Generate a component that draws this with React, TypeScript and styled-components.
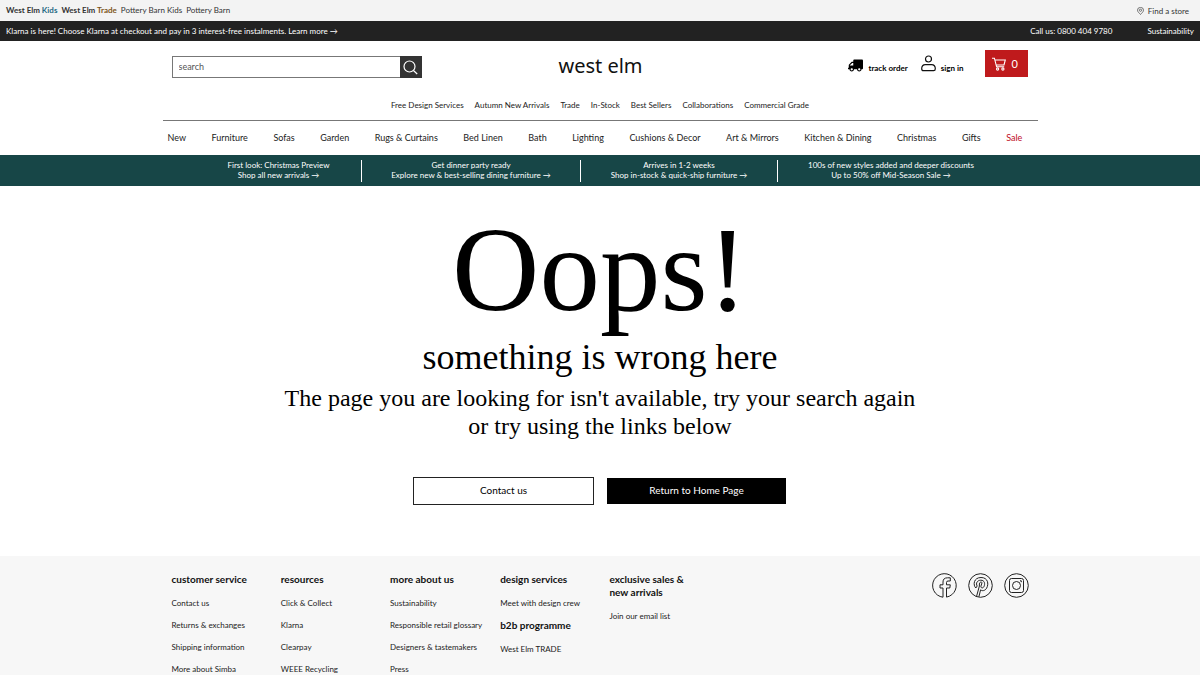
import React from "react";
import styled, { createGlobalStyle, css } from "styled-components";
import { FaTruck } from "react-icons/fa";

const sans = `Lato, "Liberation Sans", sans-serif`;
const serif = `"Liberation Serif", "Times New Roman", serif`;

const GlobalStyle = createGlobalStyle`
  *, *::before, *::after { box-sizing: border-box; }
  body {
    margin: 0;
    background: #fff;
    color: #222;
    font-family: ${sans};
    font-size: 8px;
    line-height: 10px;
  }
  a { color: inherit; text-decoration: none; }
  ul { list-style: none; margin: 0; padding: 0; }
  h1, h2, h3, p { margin: 0; }
  svg { display: block; flex: none; }
`;

const Page = styled.div`
  display: flex;
  flex-direction: column;
  min-height: 100vh;
`;

const Bar = styled.div<{ $dark?: boolean }>`
  display: flex;
  align-items: center;
  justify-content: space-between;
  padding: 0 6px;
  height: ${(p) => (p.$dark ? 20 : 21)}px;
  background: ${(p) => (p.$dark ? "#222" : "#f3f3f3")};
  color: ${(p) => (p.$dark ? "#fff" : "#333")};
`;

const BarGroup = styled.div<{ $gap: number }>`
  display: flex;
  align-items: center;
  gap: ${(p) => p.$gap}px;
`;

const BrandLink = styled.a<{ $strong?: boolean }>`
  font-weight: ${(p) => (p.$strong ? 700 : 400)};
  padding-bottom: 2px;
`;

const Accent = styled.span<{ $color: string }>`
  color: ${(p) => p.$color};
  font-weight: 700;
`;

const StoreLink = styled.a`
  display: flex;
  align-items: center;
  gap: 4px;
  padding-right: 5px;
`;

const Container = styled.div`
  width: 100%;
  max-width: 875px;
  margin: 0 auto;
`;

const Header = styled(Container)`
  display: grid;
  grid-template-columns: 1fr auto 1fr;
  padding: 9px 10px 0 9px;
  height: 59px;
`;

const SearchForm = styled.form`
  display: flex;
  width: 250px;
  height: 22px;
  margin-top: 6px;
`;

const SearchInput = styled.input`
  flex: 1;
  min-width: 0;
  padding: 0 6px 2px;
  border: 1px solid #777;
  border-right: 0;
  border-radius: 0;
  font: 9px ${sans};
  color: #333;
  &::placeholder { color: #555; opacity: 1; }
`;

const SearchButton = styled.button`
  display: grid;
  place-items: center;
  width: 22px;
  padding: 0;
  border: 0;
  background: #333;
  color: #fff;
`;

const Logo = styled.a`
  font: 20px/24px "Noto Sans", sans-serif;
  color: #111;
  margin: 4px 0 0 2px;
`;

const Actions = styled.div`
  display: flex;
  justify-content: flex-end;
  align-items: flex-start;
`;

const Action = styled.a<{ $after: number }>`
  display: flex;
  align-items: flex-end;
  gap: 5px;
  height: 23px;
  margin-right: ${(p) => p.$after}px;
  color: #000;
  font-weight: 700;
`;

const Basket = styled.button`
  display: flex;
  align-items: center;
  gap: 6px;
  width: 43px;
  height: 27px;
  padding: 0 7px;
  border: 0;
  background: #bf1a1c;
  color: #fff;
  font: 11px ${sans};
`;

const QuickLinks = styled.nav`
  display: flex;
  justify-content: center;
  gap: 11px;
  height: 20px;
`;

const MainNav = styled(Container).attrs({ as: "nav" })`
  display: flex;
  align-items: center;
  justify-content: space-between;
  height: 35px;
  padding: 0 15px 1px 5px;
  border-top: 1px solid #777;
  font-size: 9px;
`;

const NavLink = styled.a<{ $sale?: boolean }>`
  white-space: nowrap;
  color: ${(p) => (p.$sale ? "#c00d26" : "#222")};
`;

const PromoBand = styled.div`
  display: grid;
  grid-template-columns: 165px 219px 197px 227px;
  align-items: center;
  justify-content: center;
  height: 31px;
  background: #174647;
  color: #fff;
`;

const Promo = styled.a`
  padding-bottom: 2px;
  text-align: center;
  white-space: nowrap;
  & + & { border-left: 1px solid #fff; }
  span { display: block; }
`;

const Main = styled.main`
  display: flex;
  flex-direction: column;
  align-items: center;
  padding: 17px 16px 51px;
  text-align: center;
  color: #000;
  font-family: ${serif};
`;

const Oops = styled.h1`
  font-size: 121px;
  line-height: 132px;
  font-weight: 400;
`;

const Subtitle = styled.h2`
  margin-top: 1px;
  font-size: 36px;
  line-height: 42px;
  font-weight: 400;
`;

const Message = styled.p`
  max-width: 650px;
  margin-top: 6px;
  font-size: 24px;
  line-height: 28px;
`;

const Buttons = styled.div`
  display: flex;
  gap: 12px;
  margin-top: 37px;
`;

const Cta = styled.a<{ $solid?: boolean }>`
  width: 181px;
  height: 28px;
  font: 10px/25px ${sans};
  border: 1px solid ${(p) => (p.$solid ? "#fff" : "#222")};
  ${(p) => p.$solid && css`background: #000; color: #fff;`}
`;

const Footer = styled.footer`
  flex: 1;
  background: #f7f7f7;
`;

const FooterGrid = styled(Container)`
  display: grid;
  grid-template-columns: repeat(8, 1fr);
`;

const FooterColumn = styled.section`
  padding: 17px 9px 0;
`;

const FooterTitle = styled.h3`
  margin-bottom: 12px;
  font-size: 10px;
  line-height: 13px;
  color: #111;
  white-space: nowrap;
`;

const FooterLinks = styled.ul`
  display: grid;
  gap: 12px;
  white-space: nowrap;
  & + ${FooterTitle} { margin-top: 11px; }
`;

const Social = styled.div`
  grid-column: 7 / 9;
  display: flex;
  justify-content: flex-end;
  gap: 11px;
  padding: 17px 9px 0 0;
`;

const PinIcon = () => (
  <svg width="7" height="8" viewBox="0 0 14 16" fill="none" stroke="#555" strokeWidth="1.6" aria-hidden="true">
    <path d="M7 15C4 11.5 1 9.500 1 6.300A6 5.500 0 0 1 13 6.300C13 9.500 10 11.500 7 15Z" />
    <circle cx="7" cy="6.500" r="2.200" />
  </svg>
);

const SearchIcon = () => (
  <svg width="15" height="15" viewBox="0 0 15 15" fill="none" stroke="currentColor" strokeWidth="1.200" aria-hidden="true">
    <circle cx="6.500" cy="6.500" r="5.500" />
    <path d="M10.500 10.500L14.200 14" />
  </svg>
);

const Truck = styled(FaTruck)`
  transform: scaleX(-1);
`;

const PersonIcon = () => (
  <svg width="15" height="18" viewBox="0 0 15 18" fill="none" stroke="#111" strokeWidth="1.200" aria-hidden="true">
    <circle cx="7.500" cy="4" r="3" />
    <path d="M.7 13.800C.7 11 2.200 9.600 4.400 9.600H10.600C12.800 9.600 14.300 11 14.300 13.800Q14.300 15.700 12.600 15.700H2.400Q.7 15.700 .7 13.800Z" />
  </svg>
);

const CartIcon = () => (
  <svg width="14" height="14" viewBox="0 0 14 14" fill="none" stroke="currentColor" strokeWidth="1.100" aria-hidden="true">
    <path d="M0 1.200H2.400L4.600 9.800H12.200M2.900 3H13.300L12 8H4.200" />
    <circle cx="5.600" cy="12" r="1.100" />
    <circle cx="10.900" cy="12" r="1.100" />
  </svg>
);

const SocialIcon = ({ children, label }: { children: React.ReactNode; label: string }) => (
  <a href="#" aria-label={label}>
    <svg width="25" height="25" viewBox="0 0 25 25" fill="none" stroke="#222" strokeWidth="1">
      {children}
    </svg>
  </a>
);

const quickLinks = ["Free Design Services", "Autumn New Arrivals", "Trade", "In-Stock", "Best Sellers", "Collaborations", "Commercial Grade"];
const categories = ["New", "Furniture", "Sofas", "Garden", "Rugs & Curtains", "Bed Linen", "Bath", "Lighting", "Cushions & Decor", "Art & Mirrors", "Kitchen & Dining", "Christmas", "Gifts", "Sale"];
const promos = [
  ["First look: Christmas Preview", "Shop all new arrivals →"],
  ["Get dinner party ready", "Explore new & best-selling dining furniture →"],
  ["Arrives in 1-2 weeks", "Shop in-stock & quick-ship furniture →"],
  ["100s of new styles added and deeper discounts", "Up to 50% off Mid-Season Sale →"],
];
const footerColumns = [
  [{ title: "customer service", links: ["Contact us", "Returns & exchanges", "Shipping information", "More about Simba"] }],
  [{ title: "resources", links: ["Click & Collect", "Klarna", "Clearpay", "WEEE Recycling"] }],
  [{ title: "more about us", links: ["Sustainability", "Responsible retail glossary", "Designers & tastemakers", "Press"] }],
  [
    { title: "design services", links: ["Meet with design crew"] },
    { title: "b2b programme", links: ["West Elm TRADE"] },
  ],
  [{ title: "exclusive sales &\nnew arrivals", links: ["Join our email list"] }],
];

export default function App() {
  return (
    <Page>
      <GlobalStyle />
      <Bar>
        <BarGroup $gap={4}>
          <BrandLink href="#" $strong>West Elm <Accent $color="#1f6a84">Kids</Accent></BrandLink>
          <BrandLink href="#" $strong>West Elm <Accent $color="#7d5518">Trade</Accent></BrandLink>
          <BrandLink href="#">Pottery Barn Kids</BrandLink>
          <BrandLink href="#">Pottery Barn</BrandLink>
        </BarGroup>
        <StoreLink href="#"><PinIcon />Find a store</StoreLink>
      </Bar>
      <Bar $dark>
        <a href="#">Klarna is here! Choose Klarna at checkout and pay in 3 interest-free instalments. Learn more →</a>
        <BarGroup $gap={35}>
          <span>Call us: 0800 404 9780</span>
          <a href="#">Sustainability</a>
        </BarGroup>
      </Bar>
      <Header as="header">
        <SearchForm role="search">
          <SearchInput type="text" placeholder="search" aria-label="search" />
          <SearchButton type="button" aria-label="Submit search"><SearchIcon /></SearchButton>
        </SearchForm>
        <Logo href="#">west elm</Logo>
        <Actions>
          <Action href="#" $after={13}><Truck size={15} />track order</Action>
          <Action href="#" $after={21}><PersonIcon />sign in</Action>
          <Basket type="button" aria-label="Basket, 0 items"><CartIcon />0</Basket>
        </Actions>
      </Header>
      <QuickLinks>
        {quickLinks.map((l) => <NavLink href="#" key={l}>{l}</NavLink>)}
      </QuickLinks>
      <MainNav>
        {categories.map((c) => <NavLink href="#" key={c} $sale={c === "Sale"}>{c}</NavLink>)}
      </MainNav>
      <PromoBand>
        {promos.map(([a, b]) => <Promo href="#" key={a}><span>{a}</span><span>{b}</span></Promo>)}
      </PromoBand>
      <Main>
        <Oops>Oops!</Oops>
        <Subtitle>something is wrong here</Subtitle>
        <Message>The page you are looking for isn't available, try your search again or try using the links below</Message>
        <Buttons>
          <Cta href="#">Contact us</Cta>
          <Cta href="#" $solid>Return to Home Page</Cta>
        </Buttons>
      </Main>
      <Footer>
        <FooterGrid>
          {footerColumns.map((groups) => (
            <FooterColumn key={groups[0].title}>
              {groups.map((g) => (
                <React.Fragment key={g.title}>
                  <FooterTitle>
                    {g.title.split("\n").map((line, i) => <React.Fragment key={line}>{i > 0 && <br />}{line}</React.Fragment>)}
                  </FooterTitle>
                  <FooterLinks>
                    {g.links.map((l) => <li key={l}><a href="#">{l}</a></li>)}
                  </FooterLinks>
                </React.Fragment>
              ))}
            </FooterColumn>
          ))}
          <Social>
            <SocialIcon label="Facebook">
              <path d="M11 24.200A11.800 11.800 0 1 1 14.500 24.100V15H17.800L18.300 11.800H14.500V9.500Q14.500 8 16 8H18.300V4.800H15.500Q11 4.800 11 9V11.800H8V15H11Z" />
            </SocialIcon>
            <SocialIcon label="Pinterest">
              <circle cx="12.500" cy="12.500" r="11.800" />
              <path d="M7.800 15C4.800 12 5.600 4.500 13 4.500C20 4.500 21 11 18.600 15.200C17 17.900 14.200 18.300 12.600 16.800L10.900 23.800M7.800 15L9.200 13C7.500 10.500 9.200 7.200 12.800 7.200C16.800 7.200 17.200 11 16 13.500C15 15.600 12.600 15.200 12.900 13.200L14 9.800C13.500 8.300 11.600 9 11.400 11L11.400 13L8.600 23.200" />
            </SocialIcon>
            <SocialIcon label="Instagram">
              <circle cx="12.500" cy="12.500" r="11.800" />
              <rect x="5.500" y="5.500" width="14" height="14" rx="2" />
              <circle cx="12.500" cy="12.500" r="4" />
              <path d="M16 7.800H17.300V9.200" />
            </SocialIcon>
          </Social>
        </FooterGrid>
      </Footer>
    </Page>
  );
}
